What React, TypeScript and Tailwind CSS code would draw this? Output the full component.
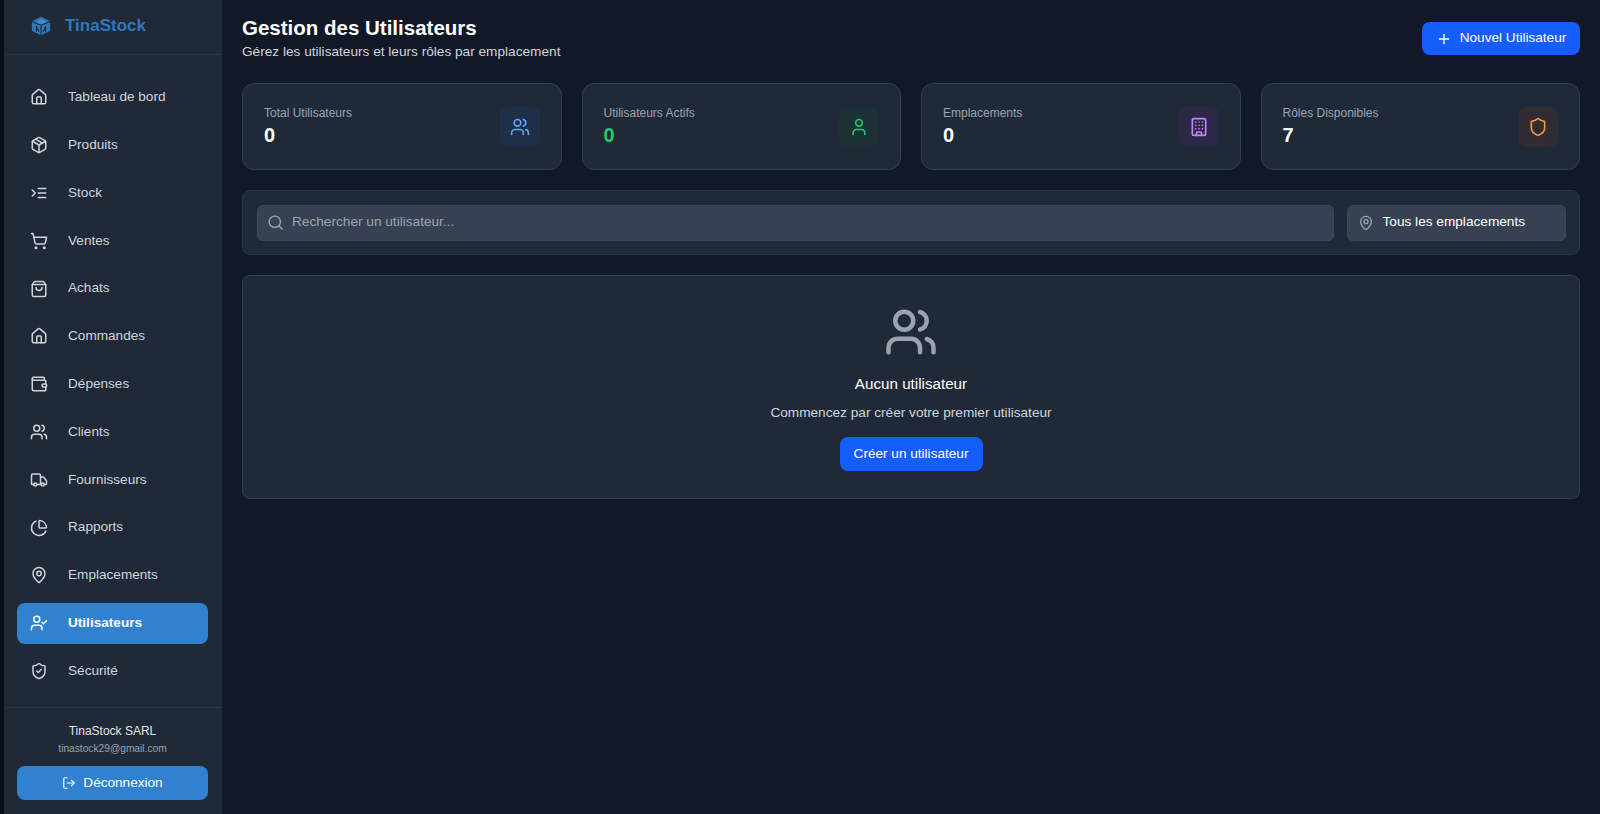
import React from 'react';
import {
  Building,
  ChartPie,
  House,
  LogOut,
  MapPin,
  Package,
  Plus,
  Search,
  Shield,
  ShieldCheck,
  ShoppingBag,
  ShoppingCart,
  Truck,
  User,
  UserCheck,
  Users,
  Wallet,
} from 'lucide-react';

function StockIcon({ className }: { className?: string }) {
  return (
    <svg viewBox="0 0 24 24" fill="none" stroke="currentColor" strokeWidth={2} strokeLinecap="round" strokeLinejoin="round" className={className}>
      <polyline points="3 8 7 12 3 16" />
      <line x1="21" y1="12" x2="11" y2="12" />
      <line x1="21" y1="6" x2="11" y2="6" />
      <line x1="21" y1="18" x2="11" y2="18" />
    </svg>
  );
}

function LogoIcon({ className }: { className?: string }) {
  return (
    <svg viewBox="0 0 24 24" className={className}>
      <path d="M12 1 21 5.5Q23 6.5 23 8.5V16.5Q23 18 21 19L12 23 3 19Q1 18 1 16.5V8.5Q1 6.5 3 5.5Z" fill="#2f78bd" />
      <path d="M12 4 18 7.2 12 10.4 6 7.2Z" fill="#3f8ad0" />
      <path d="M12 11v12M1.5 7 12 11l10.5-4M6.5 12v7M17.500 12v7M6.500 13l3 6M17.500 13l-3 6" fill="none" stroke="#1f2937" strokeWidth={1.3} />
    </svg>
  );
}

const navItems = [
  { label: 'Tableau de bord', icon: House },
  { label: 'Produits', icon: Package },
  { label: 'Stock', icon: StockIcon },
  { label: 'Ventes', icon: ShoppingCart },
  { label: 'Achats', icon: ShoppingBag },
  { label: 'Commandes', icon: House },
  { label: 'Dépenses', icon: Wallet },
  { label: 'Clients', icon: Users },
  { label: 'Fournisseurs', icon: Truck },
  { label: 'Rapports', icon: ChartPie },
  { label: 'Emplacements', icon: MapPin },
  { label: 'Utilisateurs', icon: UserCheck, active: true },
  { label: 'Sécurité', icon: ShieldCheck },
];

function Sidebar() {
  return (
    <aside className="flex h-full w-[222px] shrink-0 flex-col border-l-[4px] border-[#0a0e16] bg-[#1f2937]">
      <div className="flex h-[55px] items-center gap-[14px] border-b border-[#2a3544] pb-[3px] pl-[27px]">
        <LogoIcon className="h-[20px] w-[20px]" />
        <span className="text-[17px] font-bold text-[#2f78bd]">TinaStock</span>
      </div>
      <nav className="flex flex-1 flex-col gap-[7px] pl-[13px] pr-[14px] pt-[22px]">
        {navItems.map((item) => {
          const Icon = item.icon;
          return (
            <a
              key={item.label}
              className={
                item.active
                  ? 'flex h-[40.8px] items-center gap-[20px] rounded-lg bg-[#3182ce] pl-[13px] text-[13.6px] font-bold text-white'
                  : 'flex h-[40.8px] items-center gap-[20px] rounded-lg pl-[13px] text-[13.6px] text-[#d1d5db]'
              }
            >
              <Icon className="h-[18px] w-[18px] shrink-0" />
              {item.label}
            </a>
          );
        })}
      </nav>
      <div className="flex flex-col items-center border-t border-[#2a3544] pb-[14px] pl-[13px] pr-[14px] pt-[15px]">
        <p className="text-[12px] leading-[16px] text-[#e5e7eb]">TinaStock SARL</p>
        <p className="mt-[3px] text-[10.2px] leading-[14px] text-[#9ca3af]">tinastock29@gmail.com</p>
        <button className="mt-[10px] flex h-[34px] w-full items-center justify-center gap-[7px] rounded-lg bg-[#3182ce] text-[13.6px] text-white">
          <LogOut className="h-[14px] w-[14px]" />
          Déconnexion
        </button>
      </div>
    </aside>
  );
}

const stats = [
  { label: 'Total Utilisateurs', value: '0', valueColor: 'text-white', icon: Users, iconBox: 'bg-[#1e3a5f]/40', iconColor: 'text-[#60a5fa]' },
  { label: 'Utilisateurs Actifs', value: '0', valueColor: 'text-[#20cc6a]', icon: User, iconBox: 'bg-[#1a3d35]/40', iconColor: 'text-[#20cc6a]' },
  { label: 'Emplacements', value: '0', valueColor: 'text-white', icon: Building, iconBox: 'bg-[#3b2a5e]/45', iconColor: 'text-[#c084fc]' },
  { label: 'Rôles Disponibles', value: '7', valueColor: 'text-white', icon: Shield, iconBox: 'bg-[#43322f]/45', iconColor: 'text-[#fb923c]' },
];

function StatCard({ stat }: { stat: (typeof stats)[number] }) {
  const Icon = stat.icon;
  return (
    <div className="flex h-[87px] items-center justify-between rounded-xl border border-[#323d4d] bg-[#1f2937] pl-[21px] pr-[21px]">
      <div className="pt-[1px]">
        <p className="text-[12px] leading-[16px] text-[#9ca3af]">{stat.label}</p>
        <p className={`text-[20px] font-bold leading-[28px] ${stat.valueColor}`}>{stat.value}</p>
      </div>
      <div className={`flex h-[40px] w-[40px] items-center justify-center rounded-lg ${stat.iconBox}`}>
        <Icon className={`h-[20px] w-[20px] ${stat.iconColor}`} />
      </div>
    </div>
  );
}

export default function App() {
  return (
    <div className="flex h-screen w-full overflow-hidden bg-[#111827] font-['Liberation_Sans',Arial,sans-serif]">
      <Sidebar />
      <main className="flex min-w-0 flex-1 flex-col px-[20px] pt-[15px]">
        <div className="flex items-start justify-between">
          <div>
            <h1 className="text-[20.5px] font-bold leading-[26px] text-white">Gestion des Utilisateurs</h1>
            <p className="mt-[1px] text-[13.65px] leading-[20px] text-[#d1d5db]">Gérez les utilisateurs et leurs rôles par emplacement</p>
          </div>
          <button className="mt-[7px] flex h-[33px] w-[158px] items-center justify-center gap-[8px] rounded-lg bg-[#155dfc] text-[13.6px] text-white">
            <Plus className="h-[16px] w-[16px]" />
            Nouvel Utilisateur
          </button>
        </div>

        <div className="mt-[21px] grid grid-cols-4 gap-[20px]">
          {stats.map((stat) => (
            <StatCard key={stat.label} stat={stat} />
          ))}
        </div>

        <div className="mt-[20px] flex h-[65px] items-center gap-[13px] rounded-lg border border-[#2a3544] bg-[#1f2937] pl-[14px] pr-[13px]">
          <div className="flex h-[36px] flex-1 items-center gap-[8px] rounded-md border border-[#4b5563]/30 bg-[#374151] pl-[9px]">
            <Search className="h-[17px] w-[17px] text-[#9ca3af]" />
            <span className="text-[13.65px] text-[#9ca3af]">Rechercher un utilisateur...</span>
          </div>
          <div className="flex h-[36px] w-[219px] items-center gap-[8.500px] rounded-md border border-[#4b5563]/30 bg-[#374151] pl-[10px]">
            <MapPin className="h-[16px] w-[16px] text-[#9ca3af]" />
            <span className="text-[13.65px] text-white">Tous les emplacements</span>
          </div>
        </div>

        <div className="mt-[20px] flex h-[224px] flex-col items-center rounded-lg border border-[#323d4d] bg-[#1f2937] pt-[29px]">
          <Users className="h-[54px] w-[54px] text-[#9ca3af]" strokeWidth={2} />
          <h3 className="mt-[13px] text-[15.2px] leading-[24px] text-white">Aucun utilisateur</h3>
          <p className="mt-[7px] text-[13.65px] leading-[20px] text-[#d1d5db]">Commencez par créer votre premier utilisateur</p>
          <button className="mt-[14px] flex h-[34px] w-[143px] items-center justify-center rounded-lg bg-[#155dfc] text-[13.6px] text-white">
            Créer un utilisateur
          </button>
        </div>
      </main>
    </div>
  );
}
